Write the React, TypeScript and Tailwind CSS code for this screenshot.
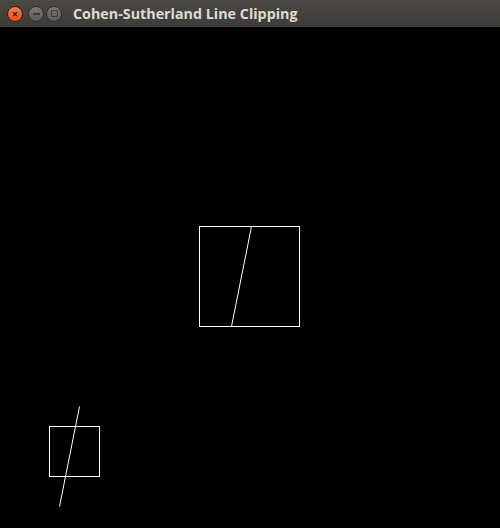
export default function App() {
  return (
    <div className="flex h-[528px] w-[500px] flex-col bg-black">
      <div className="flex h-[27px] shrink-0 items-center bg-gradient-to-b from-[#4a4944] to-[#3c3b37] pl-[7px]">
        <div className="flex items-center">
          <span className="flex h-[16px] w-[16px] items-center justify-center rounded-full border border-[#3a1a10] bg-gradient-to-b from-[#f47a4e] to-[#e2531d] text-[11px] font-bold leading-none text-[#3b1a10]">
            ×
          </span>
          <span className="ml-[5px] flex h-[16px] w-[16px] items-center justify-center rounded-full border border-[#2e2d2a] bg-gradient-to-b from-[#7a7975] to-[#5c5b57]">
            <span className="h-[2px] w-[7px] bg-[#3c3b37]" />
          </span>
          <span className="ml-[2px] flex h-[16px] w-[16px] items-center justify-center rounded-full border border-[#2e2d2a] bg-gradient-to-b from-[#7a7975] to-[#5c5b57]">
            <span className="h-[7px] w-[7px] rounded-[1px] border border-[#3c3b37]" />
          </span>
        </div>
        <span className="ml-[11px] font-['Open_Sans',sans-serif] text-[14.3px] font-bold text-[#dfdbd2]">
          Cohen-Sutherland Line Clipping
        </span>
      </div>
      <div className="flex-1">
        <svg width="500" height="501" viewBox="0 27 500 501" className="block">
          <rect x="199.5" y="226.5" width="100" height="100" fill="none" stroke="white" strokeWidth="1" />
          <line x1="251.5" y1="226.5" x2="231.5" y2="326.5" stroke="white" strokeWidth="1" />
          <rect x="49.5" y="426.5" width="50" height="50" fill="none" stroke="white" strokeWidth="1" />
          <line x1="79.5" y1="406.5" x2="59.5" y2="506.5" stroke="white" strokeWidth="1" />
        </svg>
      </div>
    </div>
  );
}
